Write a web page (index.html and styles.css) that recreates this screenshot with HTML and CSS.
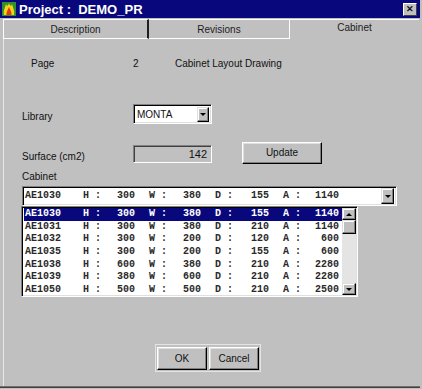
FILE: index.html
```html
<!DOCTYPE html>
<html lang="en">
<head>
    <meta charset="UTF-8">
    <title>Project : DEMO_PR</title>
    <link rel="stylesheet" href="styles.css">
</head>
<body>

<div class="window">
    <div class="titleBar">
        <svg class="appIcon" width="14" height="14" viewBox="0 0 14 14">
            <rect x="0" y="0" width="14" height="14" fill="#2f8f2f"/>
            <path d="M2 13 C1 9 3 6 4 2 C5 5 6 4 7 1 C8 4 9 5 10 2 C11 6 13 9 12 13 Z" fill="#f2d21a"/>
            <path d="M4.5 13 C4 10 6 8 7 5 C8 8 10 10 9.5 13 Z" fill="#e03a1a"/>
        </svg>
        <span class="title">Project :&nbsp; DEMO_PR</span>
        <div class="closeBtn">&#x2715;</div>
    </div>

    <div class="tabs">
        <div class="tab descTab">Description</div>
        <div class="tab revTab">Revisions</div>
        <div class="tab active">Cabinet</div>
    </div>

    <div class="panel">
        <div class="pageRow">
            <span class="pageLabel">Page</span>
            <span class="pageNum">2</span>
            <span>Cabinet Layout Drawing</span>
        </div>

        <div class="fieldRow libraryRow">
            <label class="fieldLabel">Library</label>
            <div class="select">
                <span class="selectText">MONTA</span>
                <span class="arrowBtn"><span class="arrowDown"></span></span>
            </div>
        </div>

        <div class="fieldRow surfaceRow">
            <label class="fieldLabel">Surface (cm2)</label>
            <div class="readField">142</div>
            <div class="button updateBtn">Update</div>
        </div>

        <div class="cabinetLabel">Cabinet</div>

        <div class="combo">
            <div class="item">
                <span>AE1030</span>
                <span class="dim"><span>H :</span><span>300</span></span>
                <span class="dim"><span>W :</span><span>380</span></span>
                <span class="dim"><span>D :</span><span>155</span></span>
                <span class="dim"><span>A :</span><span>1140</span></span>
            </div>
            <span class="arrowBtn comboArrow"><span class="arrowDown"></span></span>
        </div>

        <div class="list">
            <div class="rows">
                <div class="item selected">
                    <span>AE1030</span>
                    <span class="dim"><span>H :</span><span>300</span></span>
                    <span class="dim"><span>W :</span><span>380</span></span>
                    <span class="dim"><span>D :</span><span>155</span></span>
                    <span class="dim"><span>A :</span><span>1140</span></span>
                </div>
                <div class="item">
                    <span>AE1031</span>
                    <span class="dim"><span>H :</span><span>300</span></span>
                    <span class="dim"><span>W :</span><span>380</span></span>
                    <span class="dim"><span>D :</span><span>210</span></span>
                    <span class="dim"><span>A :</span><span>1140</span></span>
                </div>
                <div class="item">
                    <span>AE1032</span>
                    <span class="dim"><span>H :</span><span>300</span></span>
                    <span class="dim"><span>W :</span><span>200</span></span>
                    <span class="dim"><span>D :</span><span>120</span></span>
                    <span class="dim"><span>A :</span><span>600</span></span>
                </div>
                <div class="item">
                    <span>AE1035</span>
                    <span class="dim"><span>H :</span><span>300</span></span>
                    <span class="dim"><span>W :</span><span>200</span></span>
                    <span class="dim"><span>D :</span><span>155</span></span>
                    <span class="dim"><span>A :</span><span>600</span></span>
                </div>
                <div class="item">
                    <span>AE1038</span>
                    <span class="dim"><span>H :</span><span>600</span></span>
                    <span class="dim"><span>W :</span><span>380</span></span>
                    <span class="dim"><span>D :</span><span>210</span></span>
                    <span class="dim"><span>A :</span><span>2280</span></span>
                </div>
                <div class="item">
                    <span>AE1039</span>
                    <span class="dim"><span>H :</span><span>380</span></span>
                    <span class="dim"><span>W :</span><span>600</span></span>
                    <span class="dim"><span>D :</span><span>210</span></span>
                    <span class="dim"><span>A :</span><span>2280</span></span>
                </div>
                <div class="item">
                    <span>AE1050</span>
                    <span class="dim"><span>H :</span><span>500</span></span>
                    <span class="dim"><span>W :</span><span>500</span></span>
                    <span class="dim"><span>D :</span><span>210</span></span>
                    <span class="dim"><span>A :</span><span>2500</span></span>
                </div>
            </div>
            <div class="scrollBar">
                <span class="arrowBtn scrollBtn"><span class="arrowUp"></span></span>
                <span class="thumb"></span>
                <span class="track"></span>
                <span class="arrowBtn scrollBtn"><span class="arrowDown"></span></span>
            </div>
        </div>

        <div class="dialogButtons">
            <div class="button okBtn">OK</div>
            <div class="button cancelBtn">Cancel</div>
        </div>
    </div>
</div>

</body>
</html>
```

FILE: styles.css
```css
body {
    margin: 0;
    width: 422px;
    height: 389px;
    background-color: #c0c0c0;
    font-family: "Liberation Sans", Arial, sans-serif;
    font-size: 10px;
    color: #111;
    overflow: hidden;
}
.window {
    width: 420px;
    height: 386px;
    border-bottom: 1px solid #707070;
    box-shadow: 0 1px 0 #404040;
}
.titleBar {
    height: 18px;
    background-color: #08087c;
    display: flex;
    align-items: center;
    position: relative;
}
.appIcon {
    margin-left: 2px;
    margin-right: 3px;
}
.title {
    color: #fff;
    font-weight: bold;
    font-size: 13px;
}
.closeBtn {
    position: absolute;
    right: 3px;
    top: 3px;
    width: 12px;
    height: 11px;
    background-color: #c0c0c0;
    border-top: 1px solid #fff;
    border-left: 1px solid #fff;
    border-right: 1px solid #404040;
    border-bottom: 1px solid #404040;
    font-size: 9px;
    font-weight: bold;
    line-height: 11px;
    text-align: center;
}
.tabs {
    display: flex;
    margin-top: 1px;
    padding-left: 3px;
    height: 20px;
}
.tab {
    box-sizing: border-box;
    height: 20px;
    border-top: 1px solid #fff;
    text-align: center;
    line-height: 20px;
    color: #202020;
}
.tab:not(.active) {
    border-bottom: 1px solid #fff;
}
.descTab {
    width: 146px;
    border-left: 1px solid #fff;
    border-right: 2px solid #202020;
}
.revTab {
    width: 141px;
    border-right: 1px solid #fff;
}
.tab.active {
    width: 129px;
    line-height: 16px;
}
.panel {
    height: 347px;
    box-sizing: border-box;
    padding-left: 22px;
    box-shadow: inset 3px 0 0 #c0c0c0, inset 4px 0 0 #e8e8e8;
}
.pageRow {
    padding-top: 18px;
    height: 14px;
    line-height: 14px;
    display: flex;
}
.pageLabel {
    margin-left: 9px;
    width: 102px;
}
.pageNum {
    width: 42px;
}
.fieldRow {
    display: flex;
    align-items: flex-start;
}
.fieldLabel {
    width: 111px;
    line-height: 14px;
    align-self: flex-end;
}
.libraryRow {
    margin-top: 33px;
    height: 20px;
}
.select {
    box-sizing: border-box;
    width: 79px;
    height: 20px;
    background-color: #fff;
    border-top: 1px solid #808080;
    border-left: 1px solid #808080;
    border-right: 1px solid #fff;
    border-bottom: 1px solid #fff;
    box-shadow: inset 1px 1px 0 #000, inset -1px -1px 0 #dfdfdf;
    display: flex;
    align-items: center;
    padding: 2px 2px 2px 3px;
}
.selectText {
    flex: 1;
}
.arrowBtn {
    box-sizing: border-box;
    width: 12px;
    height: 15px;
    background-color: #c0c0c0;
    border-top: 1px solid #dfdfdf;
    border-left: 1px solid #dfdfdf;
    border-right: 1px solid #000;
    border-bottom: 1px solid #000;
    box-shadow: inset -1px -1px 0 #808080, inset 1px 1px 0 #fff;
    display: flex;
    align-items: center;
    justify-content: center;
}
.arrowDown {
    width: 0;
    height: 0;
    border-left: 3px solid transparent;
    border-right: 3px solid transparent;
    border-top: 3px solid #000;
}
.arrowUp {
    width: 0;
    height: 0;
    border-left: 3px solid transparent;
    border-right: 3px solid transparent;
    border-bottom: 3px solid #000;
}
.surfaceRow {
    margin-top: 18px;
    height: 22px;
}
.readField {
    box-sizing: border-box;
    width: 79px;
    height: 18px;
    margin-top: 3px;
    border-top: 1px solid #808080;
    border-left: 1px solid #808080;
    border-right: 1px solid #fff;
    border-bottom: 1px solid #fff;
    box-shadow: inset 1px 1px 0 #404040;
    text-align: right;
    padding-right: 4px;
    line-height: 16px;
    font-size: 11px;
}
.button {
    box-sizing: border-box;
    background-color: #c0c0c0;
    border-top: 1px solid #fff;
    border-left: 1px solid #fff;
    border-right: 1px solid #000;
    border-bottom: 1px solid #000;
    box-shadow: inset -1px -1px 0 #808080, inset 1px 1px 0 #dfdfdf;
    text-align: center;
}
.updateBtn {
    margin-left: 30px;
    width: 80px;
    height: 22px;
    line-height: 20px;
}
.cabinetLabel {
    margin-top: 6px;
    line-height: 14px;
}
.combo {
    box-sizing: border-box;
    margin-top: 2px;
    width: 375px;
    height: 20px;
    background-color: #fff;
    border-top: 1px solid #808080;
    border-left: 1px solid #808080;
    border-right: 1px solid #fff;
    border-bottom: 1px solid #fff;
    box-shadow: inset 1px 1px 0 #000, inset -1px -1px 0 #dfdfdf;
    display: flex;
    align-items: center;
    padding-left: 2px;
    padding-right: 2px;
}
.combo .item {
    flex: 1;
}
.comboArrow {
    width: 13px;
    height: 16px;
}
.item {
    display: grid;
    grid-template-columns: 44px 52px 52px 54px 56px;
    column-gap: 14px;
    font-family: "Liberation Mono", "Courier New", monospace;
    font-size: 10px;
    font-weight: bold;
    color: #2a2a2a;
    line-height: 12.7px;
    height: 12.7px;
}
.dim {
    display: flex;
    justify-content: space-between;
}
.list {
    box-sizing: border-box;
    margin-left: -1px;
    width: 337px;
    height: 91px;
    background-color: #fff;
    border-top: 1px solid #808080;
    border-left: 1px solid #808080;
    border-right: 1px solid #fff;
    border-bottom: 1px solid #fff;
    box-shadow: inset 1px 1px 0 #000, inset -1px -1px 0 #dfdfdf;
    display: flex;
    padding: 1px 1px 1px 2px;
}
.rows {
    flex: 1;
}
.rows .item {
    padding-left: 1px;
}
.item.selected {
    background-color: #08087c;
    color: #fff;
}
.scrollBar {
    width: 14px;
    display: flex;
    flex-direction: column;
    background-color: #e4e4e4;
}
.scrollBtn {
    width: 14px;
    height: 12px;
}
.thumb {
    box-sizing: border-box;
    height: 14px;
    background-color: #c0c0c0;
    border-top: 1px solid #dfdfdf;
    border-left: 1px solid #dfdfdf;
    border-right: 1px solid #000;
    border-bottom: 1px solid #000;
    box-shadow: inset -1px -1px 0 #808080, inset 1px 1px 0 #fff;
}
.track {
    flex: 1;
}
.dialogButtons {
    margin-top: 47px;
    margin-left: 133px;
    width: 106px;
    height: 28px;
    box-sizing: border-box;
    border: 1px solid #e4e4e4;
    display: flex;
    gap: 2px;
    padding: 2px 1px;
}
.okBtn {
    width: 50px;
    height: 23px;
    line-height: 21px;
}
.cancelBtn {
    width: 50px;
    height: 23px;
    line-height: 21px;
}
```
